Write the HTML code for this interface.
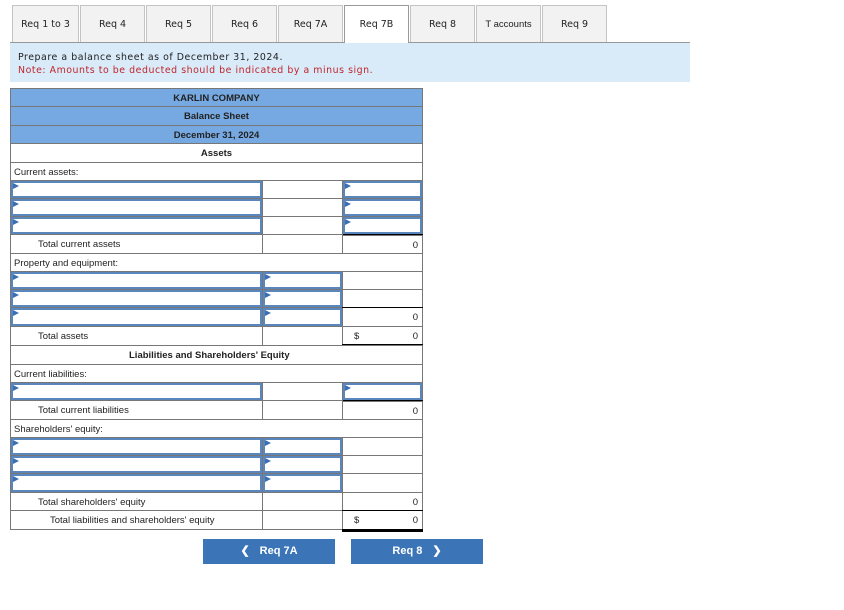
<!DOCTYPE html>
<html><head><meta charset="utf-8">
<style>
*{box-sizing:border-box;margin:0;padding:0}
body{width:844px;height:610px;background:#fff;position:relative;font-family:"Liberation Sans",Arial,sans-serif;overflow:hidden}
.tab{position:absolute;top:5px;height:37px;background:#f2f2f2;border:1px solid #c4c4c4;border-bottom:none;font-size:9.5px;color:#222;text-align:center;line-height:38px;font-family:"DejaVu Sans",sans-serif}
.tab.a{background:#fff;border:1px solid #999;border-bottom:none;height:38px;z-index:2}
.line{position:absolute;left:10px;top:42px;width:680px;height:1px;background:#999}
.info{position:absolute;left:10px;top:43px;width:680px;height:39px;background:#d9eaf8;font-family:"DejaVu Sans",sans-serif;font-size:9.4px;letter-spacing:0.55px;padding:9px 0 0 8px;line-height:12.5px;color:#222}
.info .r{color:#c0262c}
.c{position:absolute;border:1px solid #777;background:#fff;font-size:9.5px;color:#222;line-height:19px;overflow:hidden;white-space:nowrap}
.h{background:#76a9e1;font-weight:bold;text-align:center;color:#222}
.in{position:absolute;border:2px solid #5a86be;background:#fff}
.in::before{content:"";position:absolute;left:0;top:0;border-left:6px solid #3a6fb5;border-top:3px solid transparent;border-bottom:3px solid transparent}
.num{text-align:right;padding-right:4px}
.btn{position:absolute;top:539px;width:132px;height:25px;background:#3b75b8;color:#fff;font-weight:bold;font-size:11px;text-align:center;line-height:25px}
.blk{position:absolute;height:2px;background:#000}
</style></head><body>
<div class="tab" style="left:12px;width:67px">Req 1 to 3</div>
<div class="tab" style="left:80px;width:65px">Req 4</div>
<div class="tab" style="left:146px;width:65px">Req 5</div>
<div class="tab" style="left:212px;width:65px">Req 6</div>
<div class="tab" style="left:278px;width:65px">Req 7A</div>
<div class="tab a" style="left:344px;width:65px">Req 7B</div>
<div class="tab" style="left:410px;width:65px">Req 8</div>
<div class="tab" style="left:476px;width:65px;font-family:'Liberation Sans',sans-serif">T accounts</div>
<div class="tab" style="left:542px;width:65px">Req 9</div>
<div class="line"></div>
<div class="info">Prepare a balance sheet as of December 31, 2024.<br><span class="r">Note: Amounts to be deducted should be indicated by a minus sign.</span></div>

<div class="c h" style="left:10px;top:88px;width:413px;height:19px">KARLIN COMPANY</div>
<div class="c h" style="left:10px;top:106px;width:413px;height:20px">Balance Sheet</div>
<div class="c h" style="left:10px;top:125px;width:413px;height:19px">December 31, 2024</div>
<div class="c" style="left:10px;top:143px;width:413px;height:20px;text-align:center;font-weight:bold">Assets</div>
<div class="c" style="left:10px;top:162px;width:413px;height:19px;padding-left:3px">Current assets:</div>

<div class="c" style="left:10px;top:180px;width:253px;height:19px"></div><div class="c" style="left:262px;top:180px;width:81px;height:19px"></div><div class="c" style="left:342px;top:180px;width:81px;height:19px"></div>
<div class="c" style="left:10px;top:198px;width:253px;height:19px"></div><div class="c" style="left:262px;top:198px;width:81px;height:19px"></div><div class="c" style="left:342px;top:198px;width:81px;height:19px"></div>
<div class="c" style="left:10px;top:216px;width:253px;height:19px"></div><div class="c" style="left:262px;top:216px;width:81px;height:19px"></div><div class="c" style="left:342px;top:216px;width:81px;height:19px"></div>
<div class="in" style="left:11px;top:181px;width:251px;height:17px"></div><div class="in" style="left:343px;top:181px;width:79px;height:17px"></div>
<div class="in" style="left:11px;top:199px;width:251px;height:17px"></div><div class="in" style="left:343px;top:199px;width:79px;height:17px"></div>
<div class="in" style="left:11px;top:217px;width:251px;height:17px"></div><div class="in" style="left:343px;top:217px;width:79px;height:17px"></div>
<div class="blk" style="left:342px;top:234px;width:81px"></div>

<div class="c" style="left:10px;top:234px;width:253px;height:20px;padding-left:27px">Total current assets</div><div class="c" style="left:262px;top:234px;width:81px;height:20px"></div><div class="c num" style="left:342px;top:235px;width:81px;height:19px">0</div>
<div class="c" style="left:10px;top:253px;width:413px;height:19px;padding-left:3px">Property and equipment:</div>

<div class="c" style="left:10px;top:271px;width:253px;height:19px"></div><div class="c" style="left:262px;top:271px;width:81px;height:19px"></div><div class="c" style="left:342px;top:271px;width:81px;height:19px"></div>
<div class="c" style="left:10px;top:289px;width:253px;height:19px"></div><div class="c" style="left:262px;top:289px;width:81px;height:19px"></div><div class="c" style="left:342px;top:289px;width:81px;height:19px"></div>
<div class="c" style="left:10px;top:307px;width:253px;height:20px"></div><div class="c" style="left:262px;top:307px;width:81px;height:20px"></div><div class="c num" style="left:342px;top:307px;width:81px;height:20px">0</div>
<div class="in" style="left:11px;top:272px;width:251px;height:17px"></div><div class="in" style="left:263px;top:272px;width:79px;height:17px"></div>
<div class="in" style="left:11px;top:290px;width:251px;height:17px"></div><div class="in" style="left:263px;top:290px;width:79px;height:17px"></div>
<div class="in" style="left:11px;top:308px;width:251px;height:18px"></div><div class="in" style="left:263px;top:308px;width:79px;height:18px"></div>
<div class="blk" style="left:342px;top:307px;width:81px;height:1px"></div>

<div class="c" style="left:10px;top:326px;width:253px;height:20px;padding-left:27px">Total assets</div><div class="c" style="left:262px;top:326px;width:81px;height:20px"></div><div class="c num" style="left:342px;top:326px;width:81px;height:20px"><span style="float:left;padding-left:11px">$</span>0</div>
<div class="blk" style="left:342px;top:344px;width:81px;height:3px"></div>

<div class="c" style="left:10px;top:345px;width:413px;height:20px;padding-left:118px;font-weight:bold">Liabilities and Shareholders' Equity</div>
<div class="c" style="left:10px;top:364px;width:413px;height:19px;padding-left:3px">Current liabilities:</div>
<div class="c" style="left:10px;top:382px;width:253px;height:19px"></div><div class="c" style="left:262px;top:382px;width:81px;height:19px"></div><div class="c" style="left:342px;top:382px;width:81px;height:19px"></div>
<div class="in" style="left:11px;top:383px;width:251px;height:17px"></div><div class="in" style="left:343px;top:383px;width:79px;height:17px"></div>
<div class="blk" style="left:342px;top:400px;width:81px"></div>
<div class="c" style="left:10px;top:400px;width:253px;height:20px;padding-left:27px">Total current liabilities</div><div class="c" style="left:262px;top:400px;width:81px;height:20px"></div><div class="c num" style="left:342px;top:401px;width:81px;height:19px">0</div>
<div class="c" style="left:10px;top:419px;width:413px;height:19px;padding-left:3px">Shareholders' equity:</div>

<div class="c" style="left:10px;top:437px;width:253px;height:19px"></div><div class="c" style="left:262px;top:437px;width:81px;height:19px"></div><div class="c" style="left:342px;top:437px;width:81px;height:19px"></div>
<div class="c" style="left:10px;top:455px;width:253px;height:19px"></div><div class="c" style="left:262px;top:455px;width:81px;height:19px"></div><div class="c" style="left:342px;top:455px;width:81px;height:19px"></div>
<div class="c" style="left:10px;top:473px;width:253px;height:20px"></div><div class="c" style="left:262px;top:473px;width:81px;height:20px"></div><div class="c" style="left:342px;top:473px;width:81px;height:20px"></div>
<div class="in" style="left:11px;top:438px;width:251px;height:17px"></div><div class="in" style="left:263px;top:438px;width:79px;height:17px"></div>
<div class="in" style="left:11px;top:456px;width:251px;height:17px"></div><div class="in" style="left:263px;top:456px;width:79px;height:17px"></div>
<div class="in" style="left:11px;top:474px;width:251px;height:18px"></div><div class="in" style="left:263px;top:474px;width:79px;height:18px"></div>

<div class="c" style="left:10px;top:492px;width:253px;height:19px;padding-left:27px">Total shareholders' equity</div><div class="c" style="left:262px;top:492px;width:81px;height:19px"></div><div class="c num" style="left:342px;top:492px;width:81px;height:19px">0</div>
<div class="c" style="left:10px;top:510px;width:253px;height:20px;padding-left:39px">Total liabilities and shareholders' equity</div><div class="c" style="left:262px;top:510px;width:81px;height:20px"></div><div class="c num" style="left:342px;top:510px;width:81px;height:20px"><span style="float:left;padding-left:11px">$</span>0</div>
<div class="blk" style="left:342px;top:510px;width:81px;height:1px"></div>
<div class="blk" style="left:342px;top:529px;width:81px;height:3px"></div>

<div class="btn" style="left:203px"><span style="margin-right:10px">&#10094;</span>Req 7A</div>
<div class="btn" style="left:351px">Req 8<span style="margin-left:10px">&#10095;</span></div>
</body></html>
